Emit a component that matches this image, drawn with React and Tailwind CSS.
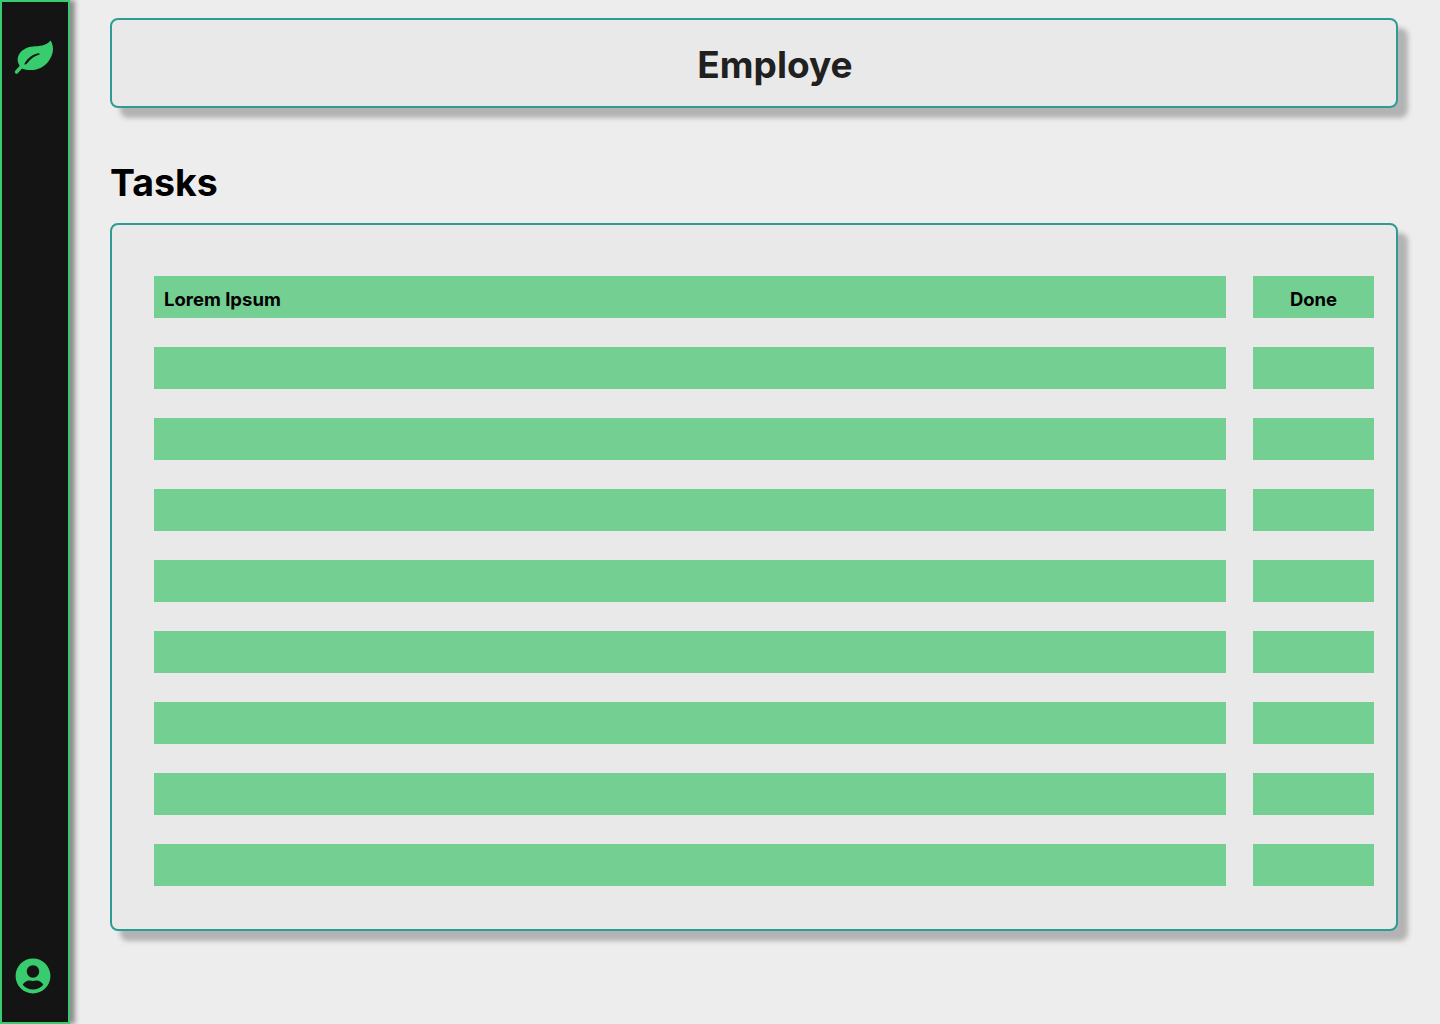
import { FaUserCircle } from 'react-icons/fa';

const rows = [
  { task: 'Lorem Ipsum', status: 'Done' },
  { task: '', status: '' },
  { task: '', status: '' },
  { task: '', status: '' },
  { task: '', status: '' },
  { task: '', status: '' },
  { task: '', status: '' },
  { task: '', status: '' },
  { task: '', status: '' },
];

const LeafLogo = () => (
  <svg width="50" height="44" viewBox="0 0 50 44" className="text-[#38cc6e]" fill="currentColor">
    <path
      fillRule="evenodd"
      d="M42.7 4.5C44.6 8 45.6 12 44.7 16C43.6 22 39.5 28 33.5 31.5C28 34.5 20 35 14 32.5C10 28.5 8.6 24 10.5 19.5C13 14 19 11 25 10.5C31 10 38 10 42.7 4.5ZM16.6 27.5C19.5 22 24.5 18.4 30.5 17.2C31.8 17 32.2 18.4 30.9 18.8C26.5 20 22.5 23 19.2 27.2C18 28.8 15.9 29 16.6 27.5Z"
    />
    <path d="M13.5 30.5L8.5 36" stroke="currentColor" strokeWidth="3.4" strokeLinecap="round" />
  </svg>
);

export default function App() {
  return (
    <div className="flex min-h-[1024px] bg-[#ededed] font-['Inter',sans-serif]">
      {/* Sidebar */}
      <aside className="flex h-[1024px] w-[70px] shrink-0 flex-col items-center justify-between border-2 border-[#38cc6e] bg-[#141414] pt-[34px] pr-[4px] pb-[28px] shadow-[5px_0_5px_#8c8c8c]">
        <LeafLogo />
        <FaUserCircle size={36} className="text-[#38cc6e]" />
      </aside>

      <main className="flex-1 pt-[18px] pr-[42px] pl-[40px]">
        <header className="flex h-[90px] items-center justify-center rounded-lg border-2 border-[#2e9c94] bg-[#e9e9e9] pt-[3px] pl-[42px] shadow-[10px_10px_5px_#b3b3b3]">
          <h1 className="text-[37px] font-bold text-[#202020]">Employe</h1>
        </header>

        <h2 className="mt-[50px] mb-[16px] h-[49px] text-[37.5px] leading-[49px] font-bold text-black">Tasks</h2>

        <section className="flex flex-col gap-[29px] rounded-lg border-2 border-[#2e9c94] bg-[#e9e9e9] pt-[51px] pr-[22px] pb-[43px] pl-[42px] shadow-[10px_10px_5px_#b3b3b3]">
          {rows.map((row, i) => (
            <div key={i} className="flex h-[42px] gap-[27px]">
              <div className="flex flex-1 items-center bg-[#74cf92] pt-[6px] pl-[10px] text-[18.5px] font-bold text-black">
                {row.task}
              </div>
              <div className="flex w-[121px] items-center justify-center bg-[#74cf92] pt-[6px] text-[18.5px] font-bold text-black">
                {row.status}
              </div>
            </div>
          ))}
        </section>
      </main>
    </div>
  );
}
